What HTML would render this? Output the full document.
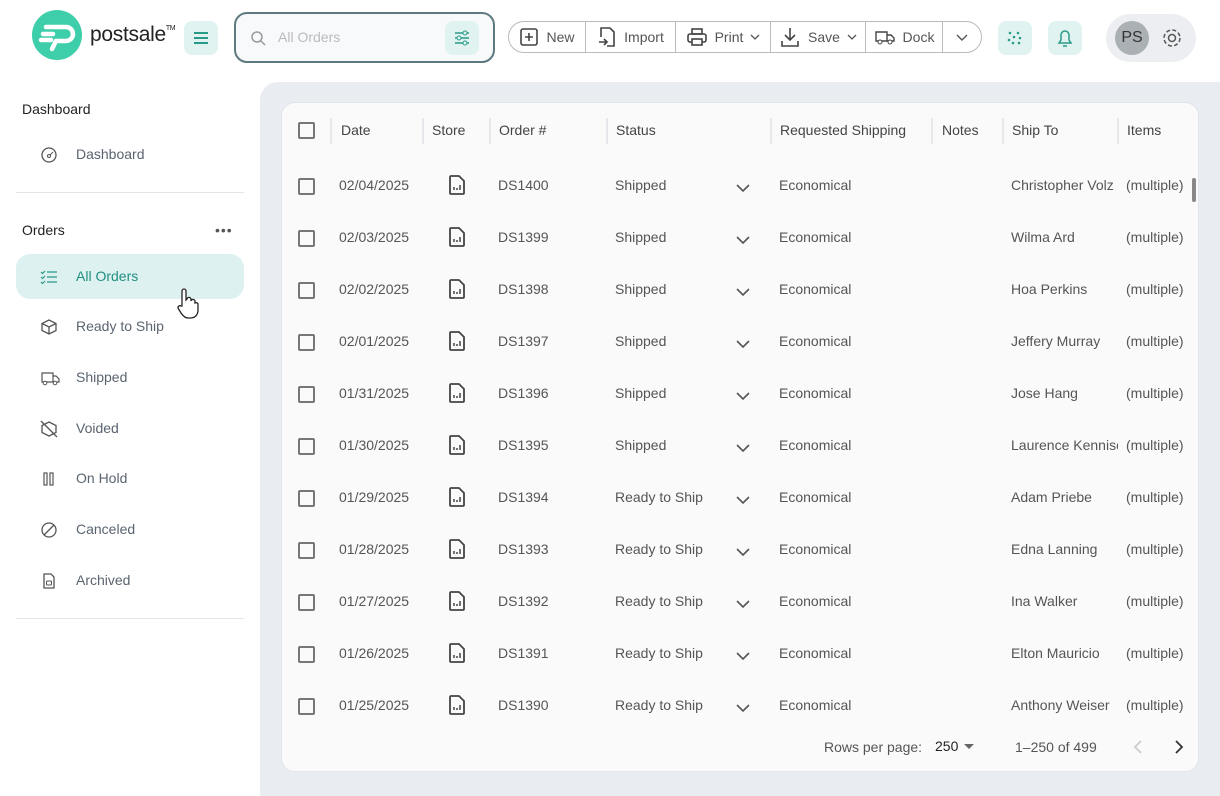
<!DOCTYPE html>
<html><head><meta charset="utf-8"><style>
*{box-sizing:border-box;margin:0;padding:0}
body{width:1220px;height:796px;overflow:hidden;background:#fff;font-family:"Liberation Sans",Arial,sans-serif;color:#555;position:relative}
.abs{position:absolute}
.logo{left:32px;top:10px;width:50px;height:50px;border-radius:50%;background:#3ecfaa}
.brand{left:90px;top:23px;font-size:21px;color:#222;letter-spacing:-.3px}
.brand sup{font-size:7px;vertical-align:top;position:relative;top:2px}
.tbtn{background:#e0f3f0;border-radius:8px}
.search{left:234px;top:12px;width:261px;height:51px;border:2px solid #5e7a80;border-radius:13px;background:#f7f9fb}
.tool{left:508px;top:21px;width:474px;height:32px;border:1px solid #bbb;border-radius:16px;display:flex;font-size:14px;color:#555;white-space:nowrap}
.tool div{display:flex;align-items:center;justify-content:center;gap:7px;border-right:1px solid #bbb;height:100%;flex:none}
.tool div:last-child{border:none}
.side{left:22px;font-size:14px}
.nav{left:76px;font-size:14px;color:#5a6470}
.ic{left:40px}
.main{left:260px;top:82px;width:960px;height:714px;background:#e9ecf1;border-top-left-radius:18px}
.card{left:281px;top:102px;width:918px;height:670px;background:#fafafb;border-radius:14px;border:1px solid #e2e5ea}
.hd{font-size:14px;color:#444;top:122px}
.sep{top:118px;width:2px;height:26px;background:#e6e8eb}
.cb{left:298px;width:17px;height:17px;border:2px solid #777;border-radius:2px}
.c{font-size:14px;color:#555}
</style></head><body>
<div class="abs logo"><svg width="50" height="50" viewBox="0 0 50 50"><path d="M14 17h20a7 7 0 0 1 0 14h-10l-4 8M11 24h10M9 30h10" stroke="#fff" stroke-width="4.5" fill="none" stroke-linecap="round"/></svg></div>
<div class="abs brand">postsale<sup>TM</sup></div>
<div class="abs tbtn" style="left:184px;top:21px;width:34px;height:34px"><svg width="34" height="34"><path d="M10 12h14M10 17h14M10 22h14" stroke="#2a9a88" stroke-width="2"/></svg></div>
<div class="abs search"><svg class="abs" style="left:14px;top:16px" width="16" height="16"><circle cx="7" cy="7" r="5" stroke="#999" fill="none" stroke-width="1.5"/><path d="M11 11l4 4" stroke="#999" stroke-width="1.5"/></svg>
<span class="abs" style="left:42px;top:15px;font-size:14px;color:#bbb">All Orders</span>
<div class="abs tbtn" style="left:209px;top:7px;width:34px;height:34px"><svg width="34" height="34"><path d="M10 12h14M10 17h14M10 22h14" stroke="#2a9a88" stroke-width="1.5"/><circle cx="20" cy="12" r="2" fill="#e0f3f0" stroke="#2a9a88"/><circle cx="14" cy="17" r="2" fill="#e0f3f0" stroke="#2a9a88"/><circle cx="20" cy="22" r="2" fill="#e0f3f0" stroke="#2a9a88"/></svg></div></div>
<div class="abs tool">
<div style="width:77px"><svg width="20" height="20"><rect x="2" y="2" width="16" height="16" rx="2" stroke="#444" fill="none" stroke-width="1.6"/><path d="M10 6v8M6 10h8" stroke="#444" stroke-width="1.6"/></svg>New</div>
<div style="width:90px"><svg width="20" height="22"><path d="M4 11V2h9l4 4v14H10M2 16h7M7 13l3 3-3 3" stroke="#444" fill="none" stroke-width="1.6"/></svg>Import</div>
<div style="width:95px"><svg width="22" height="20"><rect x="6" y="2" width="10" height="5" stroke="#444" fill="none" stroke-width="1.6"/><rect x="2" y="7" width="18" height="8" rx="2" stroke="#444" fill="none" stroke-width="1.6"/><rect x="6" y="12" width="10" height="6" stroke="#444" fill="#fff" stroke-width="1.6"/></svg>Print<svg width="10" height="6"><path d="M1 1l4 4 4-4" stroke="#555" fill="none" stroke-width="1.3"/></svg></div>
<div style="width:95px"><svg width="22" height="22"><path d="M11 2v12M6 9l5 5 5-5M3 15v5h16v-5" stroke="#444" fill="none" stroke-width="1.6"/></svg>Save<svg width="10" height="6"><path d="M1 1l4 4 4-4" stroke="#555" fill="none" stroke-width="1.3"/></svg></div>
<div style="width:77px"><svg width="22" height="18"><path d="M2 4h11v9H2zM13 7h4l3 3v3h-7" stroke="#444" fill="none" stroke-width="1.4"/><circle cx="6" cy="14" r="2" fill="#fff" stroke="#444"/><circle cx="16" cy="14" r="2" fill="#fff" stroke="#444"/></svg>Dock</div>
<div style="width:38px"><svg width="12" height="7"><path d="M1 1l5 5 5-5" stroke="#555" fill="none" stroke-width="1.4"/></svg></div></div>
<div class="abs tbtn" style="left:998px;top:21px;width:34px;height:34px"><svg width="34" height="34" fill="#2a9a88"><circle cx="12" cy="12" r="1.3"/><circle cx="20" cy="12" r="1.3"/><circle cx="16" cy="16" r="1.3"/><circle cx="22" cy="17" r="1.3"/><circle cx="11" cy="19" r="1.3"/><circle cx="15" cy="22" r="1.3"/><circle cx="21" cy="22" r="1.3"/></svg></div>
<div class="abs tbtn" style="left:1048px;top:21px;width:34px;height:34px"><svg width="34" height="34"><path d="M11 22h12l-2-3v-5a4 4 0 0 0-8 0v5zM15 25h4" stroke="#2a9a88" fill="none" stroke-width="1.5"/></svg></div>
<div class="abs" style="left:1106px;top:14px;width:90px;height:48px;border-radius:24px;background:#eceef2"></div>
<div class="abs" style="left:1115px;top:21px;width:34px;height:34px;border-radius:50%;background:#aab0b3;color:#333;font-size:16px;text-align:center;line-height:34px">PS</div>
<svg class="abs" style="left:1160px;top:26px" width="24" height="24"><circle cx="12" cy="12" r="3.5" stroke="#555" fill="none" stroke-width="1.5"/><circle cx="12" cy="12" r="8" stroke="#555" fill="none" stroke-width="1.5" stroke-dasharray="4 2.3"/></svg>

<div class="abs side" style="top:101px;color:#222">Dashboard</div>
<svg class="abs ic" style="top:146px" width="18" height="18"><circle cx="9" cy="9" r="7" stroke="#555" fill="none" stroke-width="1.3"/><circle cx="9" cy="10" r="1.5" stroke="#555" fill="none"/><path d="M10 9l3-3" stroke="#555"/></svg>
<div class="abs nav" style="top:146px">Dashboard</div>
<div class="abs" style="left:16px;top:192px;width:228px;height:1px;background:#e4e6e9"></div>
<div class="abs side" style="top:222px;color:#222">Orders</div>
<div class="abs" style="left:215px;top:222px;font-size:14px;color:#555;letter-spacing:1px">•••</div>
<div class="abs" style="left:16px;top:254px;width:228px;height:45px;border-radius:14px;background:#ddf1f0"></div>
<svg class="abs ic" style="top:268px" width="18" height="18"><path d="M7 4h10M7 9h10M7 14h10M1 4l1.5 1.5L5 3M1 9l1.5 1.5L5 8M1 14l1.5 1.5L5 13" stroke="#2a9a88" fill="none" stroke-width="1.2"/></svg>
<div class="abs nav" style="top:268px;color:#1f8f80">All Orders</div>
<svg class="abs ic" style="top:318px" width="18" height="18"><path d="M9 2l7 3.5v7L9 16l-7-3.5v-7zM2 5.5L9 9l7-3.5M9 9v7" stroke="#555" fill="none" stroke-width="1.3"/></svg>
<div class="abs nav" style="top:318px">Ready to Ship</div>
<svg class="abs ic" style="top:369px" width="20" height="18"><path d="M2 4h11v9H2zM13 7h3l3 3v3h-6" stroke="#555" fill="none" stroke-width="1.2"/><circle cx="5" cy="14" r="1.8" fill="#fff" stroke="#555"/><circle cx="15" cy="14" r="1.8" fill="#fff" stroke="#555"/></svg>
<div class="abs nav" style="top:369px">Shipped</div>
<svg class="abs ic" style="top:420px" width="18" height="18"><path d="M9 2l7 3.5v7L9 16l-7-3.5v-7zM1 1l16 16" stroke="#555" fill="none" stroke-width="1.3"/></svg>
<div class="abs nav" style="top:420px">Voided</div>
<svg class="abs ic" style="top:470px" width="18" height="18"><rect x="4" y="3" width="3" height="12" stroke="#555" fill="none" stroke-width="1.2"/><rect x="10" y="3" width="3" height="12" stroke="#555" fill="none" stroke-width="1.2"/></svg>
<div class="abs nav" style="top:470px">On Hold</div>
<svg class="abs ic" style="top:521px" width="18" height="18"><circle cx="9" cy="9" r="7" stroke="#555" fill="none" stroke-width="1.3"/><path d="M4 14L14 4" stroke="#555" stroke-width="1.3"/></svg>
<div class="abs nav" style="top:521px">Canceled</div>
<svg class="abs ic" style="top:572px" width="18" height="18"><path d="M4 2h7l3 3v11H4z" stroke="#555" fill="none" stroke-width="1.3"/><rect x="6.5" y="9" width="5" height="4" rx="1" stroke="#555" fill="none"/></svg>
<div class="abs nav" style="top:572px">Archived</div>
<div class="abs" style="left:16px;top:618px;width:228px;height:1px;background:#e4e6e9"></div>
<svg class="abs" style="left:174px;top:286px" width="28" height="34"><path d="M8 20V5a2 2 0 0 1 4 0v9l1-1a2 2 0 0 1 4 1v1a2 2 0 0 1 4 1v1a2 2 0 0 1 3 1v6c0 5-3 8-8 8h-2c-3 0-5-2-7-5l-3-5a2 2 0 0 1 3-2z" fill="#fff" stroke="#222" stroke-width="1.3"/></svg>

<div class="abs main"></div>
<div class="abs card"></div>
<div class="abs cb" style="top:122px"></div>
<div class="abs sep" style="left:330px"></div><div class="abs sep" style="left:422px"></div><div class="abs sep" style="left:489px"></div><div class="abs sep" style="left:606px"></div><div class="abs sep" style="left:770px"></div><div class="abs sep" style="left:931px"></div><div class="abs sep" style="left:1002px"></div><div class="abs sep" style="left:1117px"></div>
<div class="abs hd" style="left:341px">Date</div><div class="abs hd" style="left:432px">Store</div><div class="abs hd" style="left:499px">Order #</div><div class="abs hd" style="left:616px">Status</div><div class="abs hd" style="left:780px">Requested Shipping</div><div class="abs hd" style="left:942px">Notes</div><div class="abs hd" style="left:1012px">Ship To</div><div class="abs hd" style="left:1127px">Items</div>
<div class="abs" style="left:1192px;top:178px;width:4px;height:24px;border-radius:2px;background:#888"></div>
<div id="rows"></div>
<div class="abs c" style="left:824px;top:739px">Rows per page:</div>
<div class="abs c" style="left:935px;top:738px;color:#222">250</div>
<svg class="abs" style="left:964px;top:744px" width="12" height="6"><path d="M0 0h10l-5 5z" fill="#666"/></svg>
<div class="abs c" style="left:1015px;top:739px">1–250 of 499</div>
<svg class="abs" style="left:1133px;top:740px" width="10" height="14"><path d="M8 1L2 7l6 6" stroke="#ccc" fill="none" stroke-width="1.8"/></svg>
<svg class="abs" style="left:1174px;top:740px" width="10" height="14"><path d="M2 1l6 6-6 6" stroke="#333" fill="none" stroke-width="1.8"/></svg>
<script>
var d=[["02/04/2025","DS1400","Shipped","Christopher Volz"],["02/03/2025","DS1399","Shipped","Wilma Ard"],["02/02/2025","DS1398","Shipped","Hoa Perkins"],["02/01/2025","DS1397","Shipped","Jeffery Murray"],["01/31/2025","DS1396","Shipped","Jose Hang"],["01/30/2025","DS1395","Shipped","Laurence Kenniso"],["01/29/2025","DS1394","Ready to Ship","Adam Priebe"],["01/28/2025","DS1393","Ready to Ship","Edna Lanning"],["01/27/2025","DS1392","Ready to Ship","Ina Walker"],["01/26/2025","DS1391","Ready to Ship","Elton Mauricio"],["01/25/2025","DS1390","Ready to Ship","Anthony Weiser"]];
var h="";d.forEach(function(r,i){var y=177+i*52;
h+='<div class="abs cb" style="top:'+(y+1)+'px"></div>'+
'<div class="abs c" style="left:339px;top:'+y+'px">'+r[0]+'</div>'+
'<svg class="abs" style="left:449px;top:'+(y-2)+'px" width="16" height="20"><path d="M2 1h8l5 5v12a1 1 0 0 1-1 1H2a1 1 0 0 1-1-1V2a1 1 0 0 1 1-1z" stroke="#444" fill="none" stroke-width="1.8"/><path d="M5 15v-3M8 15v-2M11 15v-5" stroke="#444" stroke-width="1.5"/></svg>'+
'<div class="abs c" style="left:498px;top:'+y+'px">'+r[1]+'</div>'+
'<div class="abs c" style="left:615px;top:'+y+'px">'+r[2]+'</div>'+
'<svg class="abs" style="left:736px;top:'+(y+7)+'px" width="14" height="9"><path d="M1 1l6 6 6-6" stroke="#555" fill="none" stroke-width="1.6"/></svg>'+
'<div class="abs c" style="left:779px;top:'+y+'px">Economical</div>'+
'<div class="abs c" style="left:1011px;top:'+y+'px;width:107px;overflow:hidden;white-space:nowrap">'+r[3]+'</div>'+
'<div class="abs c" style="left:1126px;top:'+y+'px">(multiple)</div>';});
document.getElementById("rows").innerHTML=h;
</script>
</body></html>
